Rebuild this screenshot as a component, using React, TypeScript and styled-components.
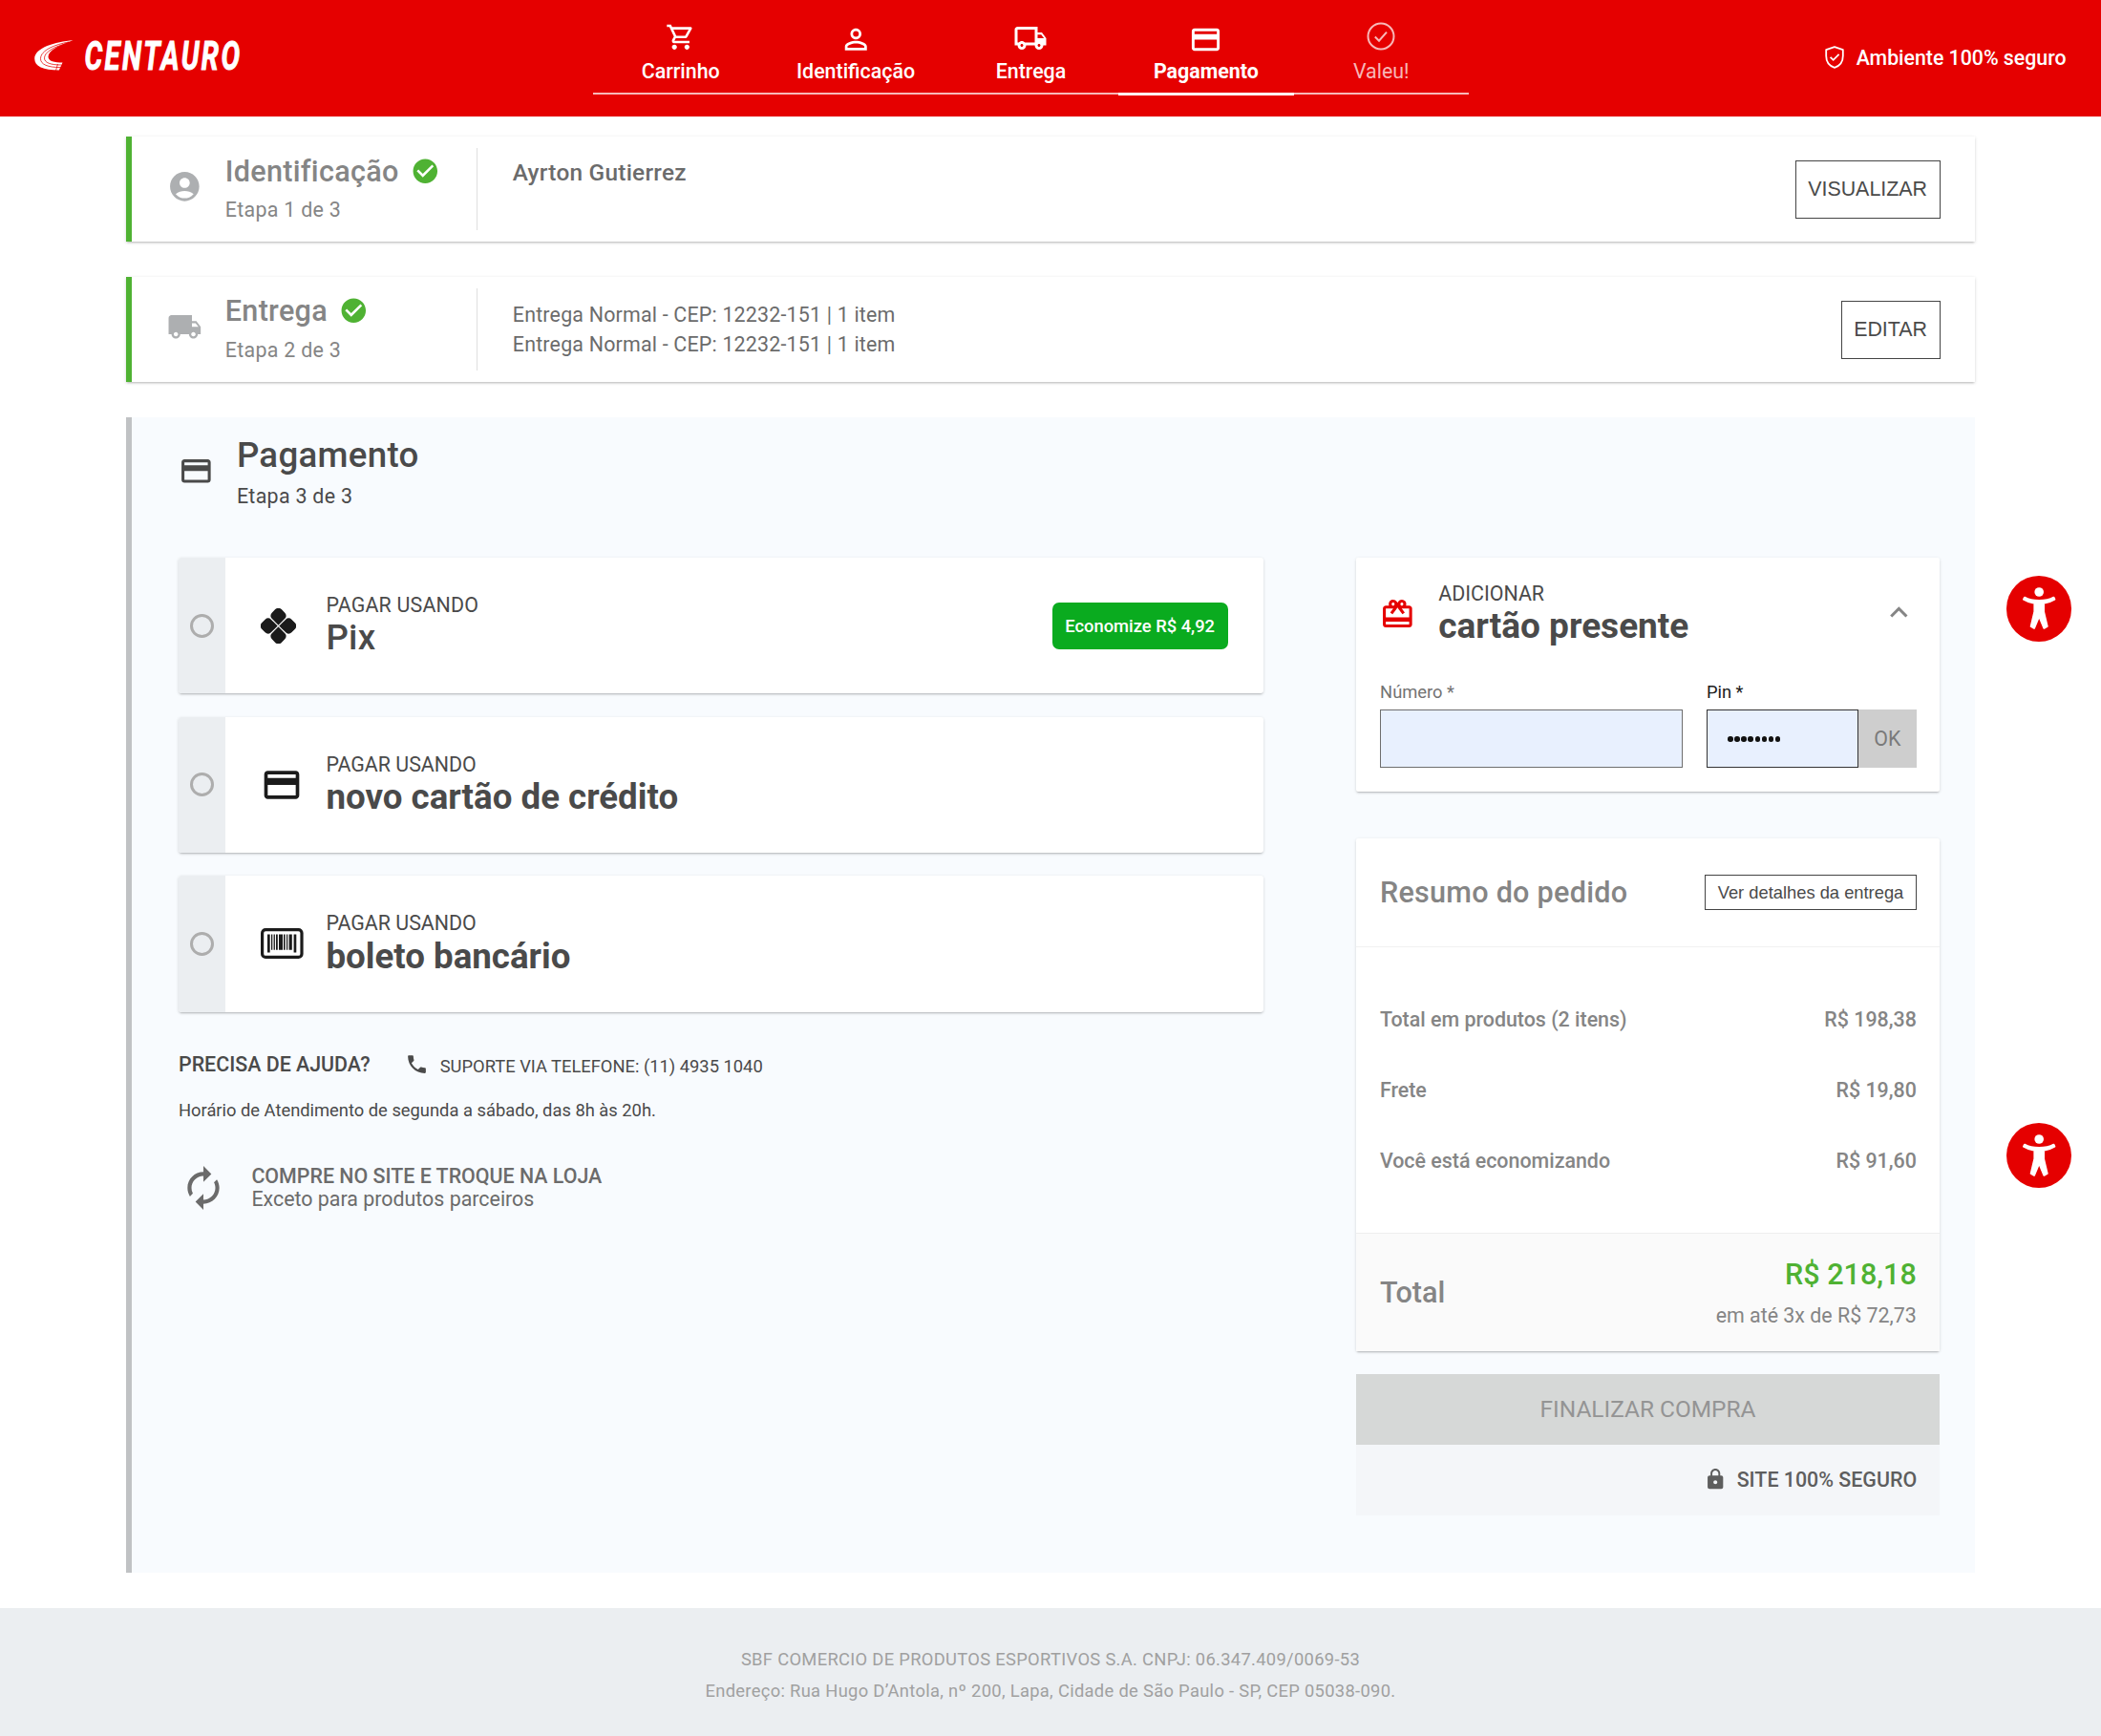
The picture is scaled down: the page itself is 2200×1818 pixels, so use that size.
import React from "react";
import styled, { createGlobalStyle, css } from "styled-components";
import {
  MdAccountCircle,
  MdAutorenew,
  MdCardGiftcard,
  MdCheckCircle,
  MdKeyboardArrowUp,
  MdLocalShipping,
  MdLock,
  MdOutlineCreditCard,
  MdOutlineLocalShipping,
  MdOutlineShoppingCart,
  MdPersonOutline,
  MdPhone,
} from "react-icons/md";

const red = "#e50000";
const green = "#4fb233";
const sans = `Roboto, "Liberation Sans", sans-serif`;
const arial = `"Liberation Sans", Arial, sans-serif`;

const GlobalStyle = createGlobalStyle`
  *, *::before, *::after { box-sizing: border-box; }
  body { margin: 0; background: #fff; font-family: ${sans}; }
  svg { display: block; flex: none; }
  h1, h2, p { margin: 0; }
`;

const shadow = css`
  box-shadow: 0 2px 2px -1px rgba(0, 0, 0, 0.18), 0 1px 3.5px rgba(0, 0, 0, 0.14);
`;

const Page = styled.div`
  position: relative;
  width: 2200px;
  height: 1818px;
  display: flex;
  flex-direction: column;
  overflow: hidden;
`;

/* ---------- header ---------- */

const Header = styled.header`
  display: grid;
  grid-template-columns: 621px 917px 1fr;
  height: 122px;
  flex: none;
  background: ${red};
  color: #fff;
`;

const LogoLink = styled.div`
  padding: 20px 0 0 30px;
`;

const Steps = styled.nav`
  display: grid;
  grid-template-columns: repeat(5, 1fr);
  align-items: start;
`;

const StepItem = styled.div<{ $active?: boolean; $muted?: boolean }>`
  display: flex;
  flex-direction: column;
  align-items: center;
  font-size: 21.4px;
  line-height: 24.4px;
  font-weight: ${(p) => (p.$active ? 700 : p.$muted ? 400 : 500)};
  color: ${(p) => (p.$muted ? "rgba(255,255,255,.72)" : "#fff")};

  &::after {
    content: "";
    align-self: stretch;
    margin-top: 10px;
    height: ${(p) => (p.$active ? 3 : 2)}px;
    background: ${(p) => (p.$active ? "#fff" : "rgba(255,255,255,.72)")};
  }
`;

const StepIcon = styled.div<{ $drop: number }>`
  height: 62.6px;
  display: flex;
  align-items: flex-end;
  padding-bottom: ${(p) => p.$drop}px;
`;

const Secure = styled.div`
  display: flex;
  align-items: center;
  justify-content: flex-end;
  gap: 12.5px;
  padding: 0 36.5px 1.2px 0;
  font-size: 21.3px;
  font-weight: 500;
`;

/* ---------- finished steps ---------- */

const Main = styled.main`
  display: flex;
  flex-direction: column;
  gap: 36.7px;
  width: 1936px;
  margin: 21.3px 0 0 132px;
`;

const DoneCard = styled.section`
  display: flex;
  height: 110px;
  padding-right: 36.4px;
  background: #fff;
  border-left: 6px solid ${green};
  ${shadow}
`;

const DoneHead = styled.div`
  display: flex;
  width: 361px;
  padding: 18.4px 0 0 36.7px;
  gap: 24.4px;
  color: #858585;

  > svg {
    margin-top: 15.4px;
    color: #adafb1;
  }
`;

const DoneTitle = styled.h2`
  display: flex;
  align-items: center;
  gap: 12px;
  font-size: 30.56px;
  line-height: 36.7px;
  font-weight: 500;
  letter-spacing: 0.3px;

  svg {
    color: ${green};
    margin-top: -2px;
  }
`;

const StepCount = styled.p<{ $gap: number }>`
  margin-top: ${(p) => p.$gap}px;
  font-size: 21.4px;
  line-height: 24.4px;
  letter-spacing: 0.3px;
`;

const Divider = styled.div`
  width: 1px;
  margin: 12px 0;
  background: #dfdfdf;
`;

const DoneBody = styled.div`
  flex: 1;
  padding: 24.2px 0 0 36.8px;
  font-size: 21.4px;
  line-height: 31.2px;
  letter-spacing: 0.2px;
  color: #6b6b6b;
`;

const CustomerName = styled.p`
  font-size: 24.4px;
  line-height: 27.7px;
  font-weight: 500;
  letter-spacing: 0.25px;
`;

const OutlineButton = styled.button<{ $small?: boolean }>`
  align-self: center;
  flex: none;
  height: ${(p) => (p.$small ? 37 : 61)}px;
  margin-top: 0.9px;
  padding: 0 ${(p) => (p.$small ? 12.5 : 12.6)}px;
  border: ${(p) => (p.$small ? 1.5 : 1)}px solid #444;
  background: #fff;
  font-family: ${arial};
  font-size: ${(p) => (p.$small ? 18.33 : 21.4)}px;
  color: #4a4a4a;
`;

/* ---------- payment step ---------- */

const Payment = styled.section`
  height: 1210px;
  padding: 18.8px 36.7px 0 49px;
  border-left: 6px solid #c0c2c4;
  background: #f8fbfe;
  color: #4a4a4a;
`;

const PaymentHead = styled.div`
  display: flex;
  gap: 24.2px;

  > svg {
    margin-top: 19.3px;
  }
`;

const PaymentTitle = styled.h1`
  font-size: 36.67px;
  line-height: 44px;
  font-weight: 500;
  letter-spacing: 0.3px;
`;

const Columns = styled.div`
  display: grid;
  grid-template-columns: 1135.5px 611.5px;
  justify-content: space-between;
  margin-top: 51.6px;
`;

const Options = styled.div`
  display: flex;
  flex-direction: column;
  gap: 24.4px;
`;

const Option = styled.label`
  display: flex;
  height: 142.2px;
  background: #fff;
  border-radius: 3px;
  ${shadow}
`;

const RadioCell = styled.span`
  display: grid;
  place-items: center;
  width: 49px;
  border-radius: 3px 0 0 3px;
  background: #ebeef1;
`;

const Radio = styled.span`
  width: 25px;
  height: 25px;
  border: 3px solid #adadad;
  border-radius: 50%;
`;

const OptionIcon = styled.span`
  display: flex;
  align-items: center;
  width: 105.4px;
  padding-left: 36.6px;
  color: #1b1b1b;
`;

const OptionText = styled.span`
  flex: 1;
  padding-top: 37.8px;
`;

const Overline = styled.span<{ $wide?: boolean }>`
  display: block;
  font-size: 21.4px;
  line-height: 24.4px;
  letter-spacing: ${(p) => (p.$wide ? 0.2 : 0)}px;
`;

const BigLabel = styled.span<{ $medium?: boolean; $size?: number }>`
  display: block;
  margin-top: 2px;
  font-size: ${(p) => p.$size ?? 36.7}px;
  line-height: 40px;
  font-weight: ${(p) => (p.$medium ? 500 : 700)};
  letter-spacing: ${(p) => (p.$medium ? 0.3 : 0)}px;
`;

const SaveBadge = styled.span`
  align-self: center;
  margin-right: 37px;
  padding: 0 13.5px;
  border-radius: 7px;
  background: #0aab1f;
  color: #fff;
  font-size: 18.33px;
  line-height: 49px;
  font-weight: 500;
`;

const HelpRow = styled.div`
  display: flex;
  align-items: flex-start;
  margin-top: 43px;
  height: 26.9px;
  line-height: 24.4px;

  svg {
    margin-top: -0.9px;
  }
`;

const HelpTitle = styled.span`
  margin-right: 35.8px;
  font-size: 21.4px;
  font-weight: 500;
`;

const HelpPhone = styled.span`
  margin: 2.6px 0 0 12.2px;
  font-size: 18.33px;
`;

const Hours = styled.p`
  margin-top: 21.4px;
  font-size: 18.33px;
  line-height: 24.4px;
`;

const Exchange = styled.div`
  display: flex;
  gap: 25.4px;
  margin: 43.8px 0 0 1px;
  font-size: 21.4px;
  line-height: 24.4px;
  color: #6b6b6b;

  > div {
    padding-top: 1px;
  }

  strong {
    font-weight: 500;
  }
`;

/* ---------- gift card ---------- */

const Panel = styled.section`
  background: #fff;
  border-radius: 2px;
  ${shadow}
`;

const GiftPanel = styled(Panel)`
  height: 244.4px;
  padding: 25.8px 24.5px 0 25.3px;
`;

const GiftHead = styled.div`
  display: flex;
  gap: 24.4px;
`;

const GiftIcon = styled.span`
  margin-top: 15px;
  color: ${red};
`;

const GiftText = styled.span`
  flex: 1;
`;

const GiftToggle = styled.span`
  margin-top: 12.8px;
  color: #858585;
`;

const GiftForm = styled.div`
  display: grid;
  grid-template-columns: 317.3px 1fr;
  gap: 24.5px;
  margin-top: 36.8px;
`;

const FieldLabel = styled.span<{ $dark?: boolean }>`
  display: block;
  margin-bottom: 5.8px;
  font-size: 18.33px;
  line-height: 24.4px;
  color: ${(p) => (p.$dark ? "#1c1c1c" : "#737373")};
`;

const FieldRow = styled.div`
  display: flex;
  height: 61px;
`;

const Field = styled.div<{ $dark?: boolean }>`
  flex: 1;
  display: flex;
  align-items: center;
  padding-left: 21.3px;
  border: 1px solid ${(p) => (p.$dark ? "#333" : "#6e6e6e")};
  background: #e8f0fe;
  color: #111;
`;

const Dots = styled.span`
  display: flex;
  gap: 1.6px;

  i {
    width: 5.5px;
    height: 5.5px;
    border-radius: 50%;
    background: #111;
  }
`;

const OkButton = styled.button`
  width: 61px;
  padding: 0;
  border: 0;
  background: #cecece;
  color: #7a7a7a;
  font: 400 21.4px ${sans};
`;

/* ---------- order summary ---------- */

const Summary = styled(Panel)`
  margin-top: 49px;
  color: #858585;
`;

const SummaryHead = styled.div`
  display: flex;
  align-items: center;
  justify-content: space-between;
  height: 114.3px;
  padding: 0 24.5px 0 25.1px;
  border-bottom: 1px solid #f1f1f1;
`;

const SummaryTitle = styled.h2`
  font-size: 30.56px;
  font-weight: 500;
  letter-spacing: 0.27px;
`;

const SummaryRows = styled.div`
  padding: 39.4px 24.5px 37.6px 25.1px;
`;

const SummaryRow = styled.div`
  display: flex;
  justify-content: space-between;
  font-size: 21.4px;
  line-height: 74px;
  font-weight: 500;
`;

const TotalBar = styled.div`
  display: flex;
  align-items: center;
  justify-content: space-between;
  height: 124px;
  padding: 0 24.5px 0 25.1px;
  border-top: 1px solid #eee;
  background: #fafafa;
  font-size: 30.56px;
  font-weight: 500;
`;

const TotalValue = styled.div`
  padding-top: 1px;
  text-align: right;
  line-height: 36.7px;
  color: ${green};
`;

const Installments = styled.p`
  margin-top: 11.8px;
  font-size: 21.4px;
  line-height: 24.4px;
  font-weight: 400;
  color: #858585;
`;

const Finish = styled.button`
  display: block;
  width: 100%;
  height: 73.4px;
  margin-top: 24.4px;
  padding: 0;
  border: 0;
  background: #d6d8d7;
  color: #949494;
  font: 400 24.44px ${sans};
`;

const SafeSite = styled.div`
  display: flex;
  align-items: center;
  justify-content: flex-end;
  gap: 10.5px;
  height: 73.9px;
  padding-right: 24.2px;
  background: #f4f6f9;
  color: #5e5e5e;
  font-size: 21.4px;
  font-weight: 500;
`;

/* ---------- footer and floating buttons ---------- */

const Footer = styled.footer`
  flex: 1;
  margin-top: 37px;
  padding-top: 37px;
  background: #ebeef1;
  color: #a0a0a0;
  text-align: center;
  font-size: 18.33px;
  line-height: 33.8px;
  letter-spacing: 0.32px;
`;

const FloatingButton = styled.button<{ $top: number }>`
  position: absolute;
  top: ${(p) => p.$top}px;
  left: 2100.8px;
  width: 68.4px;
  height: 68.4px;
  padding: 0;
  border: 0;
  border-radius: 50%;
  background: ${red};
`;

/* ---------- drawings ---------- */

const Logo = () => (
  <svg width="260" height="80" viewBox="0 -10 260 80">
    <path
      fill="#fff"
      d="M46.5 12.3C28 13.8 6.2 20 6.2 31.5C6.2 39.5 15 43.4 31.8 43.6L35.5 35.6C27 35.6 20.5 34 20.5 29.5C20.5 23.5 30 17.8 46.5 12.3Z"
    />
    <g fill="none" stroke={red} strokeWidth="0.75">
      <path d="M42 14C28 16.5 12.5 22.5 12.500 31.500C12.500 37.500 20 40.600 33.500 40.600" />
      <path d="M38 16C27 19 16.500 24.500 16.500 30.800C16.500 35.800 23 38 34.500 38" />
      <path d="M30.500 37L28.500 43.800" />
    </g>
    <text
      x="58.5"
      y="43.2"
      fill="#fff"
      stroke="#fff"
      strokeWidth="1"
      fontFamily="Roboto, sans-serif"
      fontSize="42.500"
      fontWeight="700"
      fontStyle="italic"
      letterSpacing="3.500"
      textLength="165"
      lengthAdjust="spacingAndGlyphs"
    >
      CENTAURO
    </text>
  </svg>
);

const RoundCheck = () => (
  <svg width="30" height="30" viewBox="0 0 30 30" fill="none" stroke="currentColor" strokeWidth="2">
    <circle cx="15" cy="15" r="13.500" />
    <path d="M8.800 15.500L13 19.700L21 10.600" />
  </svg>
);

const Shield = () => (
  <svg width="20" height="24" viewBox="0 0 20 24" fill="none" stroke="currentColor" strokeWidth="1.800">
    <path d="M10 1.200L18.800 4.200V10.500C18.800 16.500 15.500 21 10 22.800C4.500 21 1.200 16.500 1.200 10.500V4.200Z" strokeLinejoin="round" />
    <path d="M5.600 11.800L8.700 14.800L14.600 8.800" />
  </svg>
);

const PixIcon = () => (
  <svg width="37" height="37" viewBox="-18.500 -18.500 37 37" fill="currentColor">
    <g transform="rotate(45)">
      <rect x="-14.600" y="-14.600" width="14.200" height="14.200" rx="4.600" />
      <rect x="0.400" y="-14.600" width="14.200" height="14.200" rx="4.600" />
      <rect x="-14.600" y="0.400" width="14.200" height="14.200" rx="4.600" />
      <rect x="0.400" y="0.400" width="14.200" height="14.200" rx="4.600" />
      <rect x="-6.500" y="-6.500" width="13" height="13" />
      <path d="M-14.600 0H14.600M0 -14.600V14.600" stroke="#fff" strokeWidth="1.200" />
    </g>
  </svg>
);

const BoletoIcon = () => (
  <svg width="45" height="32" viewBox="0 0 45 32" fill="currentColor">
    <rect x="1.600" y="1.600" width="41.400" height="28.800" rx="3.500" fill="none" stroke="currentColor" strokeWidth="3.200" />
    <path d="M7 6.500h2.700v19H7zM11 6.500h1.300v16.200H11zM13.600 6.500h1.300v16.200h-1.300zM16 6.500h1.800v16.200H16zM19 6.500h4v16.200h-4zM24 6.500h1.600v16.200H24zM27 6.500h1.200v16.200H27zM29.600 6.500h3.200v16.200h-3.200zM34.600 6.500h2.700v19h-2.700z" />
  </svg>
);

const PersonFigure = () => (
  <svg width="68.400" height="68.400" viewBox="10.800 8.500 68.400 68.400">
    <circle cx="45" cy="25.500" r="4.800" fill="#fff" />
    <path
      fill="#fff"
      stroke="#fff"
      strokeWidth="2"
      strokeLinejoin="round"
      d="M29.800 31.200C34 33.600 39.500 34.600 45 34.600S56 33.600 60.300 31.200L61.200 33.200C57.500 35.600 53.500 36.600 49.800 37.200V46L53.500 61.500L50.200 63.300L45 50.800L39.800 63.300L36.500 61.500L40.200 46V37.200C36.500 36.600 32.500 35.600 28.800 33.200Z"
    />
  </svg>
);

const steps = [
  { label: "Carrinho", icon: <MdOutlineShoppingCart size={31.5} />, drop: 8.6 },
  { label: "Identificação", icon: <MdPersonOutline size={34.5} />, drop: 3.7 },
  { label: "Entrega", icon: <MdOutlineLocalShipping size={36} />, drop: 5 },
  { label: "Pagamento", icon: <MdOutlineCreditCard size={35} />, drop: 3.7, active: true },
  { label: "Valeu!", icon: <RoundCheck />, drop: 9.5, muted: true },
];

const options = [
  { label: "Pix", icon: <PixIcon />, badge: "Economize R$ 4,92", medium: true },
  { label: "novo cartão de crédito", icon: <MdOutlineCreditCard size={44} /> },
  { label: "boleto bancário", icon: <BoletoIcon /> },
];

const summaryRows = [
  ["Total em produtos (2 itens)", "R$ 198,38"],
  ["Frete", "R$ 19,80"],
  ["Você está economizando", "R$ 91,60"],
];

export default function App() {
  return (
    <>
      <GlobalStyle />
      <Page>
        <Header>
          <LogoLink>
            <Logo />
          </LogoLink>
          <Steps>
            {steps.map((s) => (
              <StepItem key={s.label} $active={s.active} $muted={s.muted}>
                <StepIcon $drop={s.drop}>{s.icon}</StepIcon>
                {s.label}
              </StepItem>
            ))}
          </Steps>
          <Secure>
            <Shield />
            Ambiente 100% seguro
          </Secure>
        </Header>

        <Main>
          <DoneCard>
            <DoneHead>
              <MdAccountCircle size={36.7} />
              <div>
                <DoneTitle>
                  Identificação <MdCheckCircle size={30.6} />
                </DoneTitle>
                <StepCount $gap={9.8}>Etapa 1 de 3</StepCount>
              </div>
            </DoneHead>
            <Divider />
            <DoneBody>
              <CustomerName>Ayrton Gutierrez</CustomerName>
            </DoneBody>
            <OutlineButton>VISUALIZAR</OutlineButton>
          </DoneCard>

          <DoneCard>
            <DoneHead>
              <MdLocalShipping size={36.7} />
              <div>
                <DoneTitle>
                  Entrega <MdCheckCircle size={30.6} />
                </DoneTitle>
                <StepCount $gap={9.8}>Etapa 2 de 3</StepCount>
              </div>
            </DoneHead>
            <Divider />
            <DoneBody>
              <p>Entrega Normal - CEP: 12232-151 | 1 item</p>
              <p>Entrega Normal - CEP: 12232-151 | 1 item</p>
            </DoneBody>
            <OutlineButton>EDITAR</OutlineButton>
          </DoneCard>

          <Payment>
            <PaymentHead>
              <MdOutlineCreditCard size={36.7} />
              <div>
                <PaymentTitle>Pagamento</PaymentTitle>
                <StepCount $gap={8.7}>Etapa 3 de 3</StepCount>
              </div>
            </PaymentHead>

            <Columns>
              <div>
                <Options>
                  {options.map((o) => (
                    <Option key={o.label}>
                      <RadioCell>
                        <Radio />
                      </RadioCell>
                      <OptionIcon>{o.icon}</OptionIcon>
                      <OptionText>
                        <Overline $wide={o.medium}>PAGAR USANDO</Overline>
                        <BigLabel $medium={o.medium}>{o.label}</BigLabel>
                      </OptionText>
                      {o.badge && <SaveBadge>{o.badge}</SaveBadge>}
                    </Option>
                  ))}
                </Options>
                <HelpRow>
                  <HelpTitle>PRECISA DE AJUDA?</HelpTitle>
                  <MdPhone size={25} />
                  <HelpPhone>SUPORTE VIA TELEFONE: (11) 4935 1040</HelpPhone>
                </HelpRow>
                <Hours>Horário de Atendimento de segunda a sábado, das 8h às 20h.</Hours>
                <Exchange>
                  <MdAutorenew size={50} />
                  <div>
                    <strong>COMPRE NO SITE E TROQUE NA LOJA</strong>
                    <p>Exceto para produtos parceiros</p>
                  </div>
                </Exchange>
              </div>

              <div>
                <GiftPanel>
                  <GiftHead>
                    <GiftIcon>
                      <MdCardGiftcard size={36.7} />
                    </GiftIcon>
                    <GiftText>
                      <Overline>ADICIONAR</Overline>
                      <BigLabel $size={37}>cartão presente</BigLabel>
                    </GiftText>
                    <GiftToggle>
                      <MdKeyboardArrowUp size={36.7} />
                    </GiftToggle>
                  </GiftHead>
                  <GiftForm>
                    <div>
                      <FieldLabel>Número *</FieldLabel>
                      <FieldRow>
                        <Field />
                      </FieldRow>
                    </div>
                    <div>
                      <FieldLabel $dark>Pin *</FieldLabel>
                      <FieldRow>
                        <Field $dark>
                          <Dots>
                            {Array.from({ length: 8 }, (_, i) => (
                              <i key={i} />
                            ))}
                          </Dots>
                        </Field>
                        <OkButton>OK</OkButton>
                      </FieldRow>
                    </div>
                  </GiftForm>
                </GiftPanel>

                <Summary>
                  <SummaryHead>
                    <SummaryTitle>Resumo do pedido</SummaryTitle>
                    <OutlineButton $small>Ver detalhes da entrega</OutlineButton>
                  </SummaryHead>
                  <SummaryRows>
                    {summaryRows.map(([label, value]) => (
                      <SummaryRow key={label}>
                        <span>{label}</span>
                        <span>{value}</span>
                      </SummaryRow>
                    ))}
                  </SummaryRows>
                  <TotalBar>
                    <span>Total</span>
                    <TotalValue>
                      R$ 218,18
                      <Installments>em até 3x de R$ 72,73</Installments>
                    </TotalValue>
                  </TotalBar>
                </Summary>

                <Finish>FINALIZAR COMPRA</Finish>
                <SafeSite>
                  <MdLock size={24.4} />
                  SITE 100% SEGURO
                </SafeSite>
              </div>
            </Columns>
          </Payment>
        </Main>

        <Footer>
          <p>SBF COMERCIO DE PRODUTOS ESPORTIVOS S.A. CNPJ: 06.347.409/0069-53</p>
          <p>Endereço: Rua Hugo D’Antola, nº 200, Lapa, Cidade de São Paulo - SP, CEP 05038-090.</p>
        </Footer>

        <FloatingButton $top={603.4} aria-label="Acessibilidade">
          <PersonFigure />
        </FloatingButton>
        <FloatingButton $top={1175.8} aria-label="Acessibilidade">
          <PersonFigure />
        </FloatingButton>
      </Page>
    </>
  );
}
